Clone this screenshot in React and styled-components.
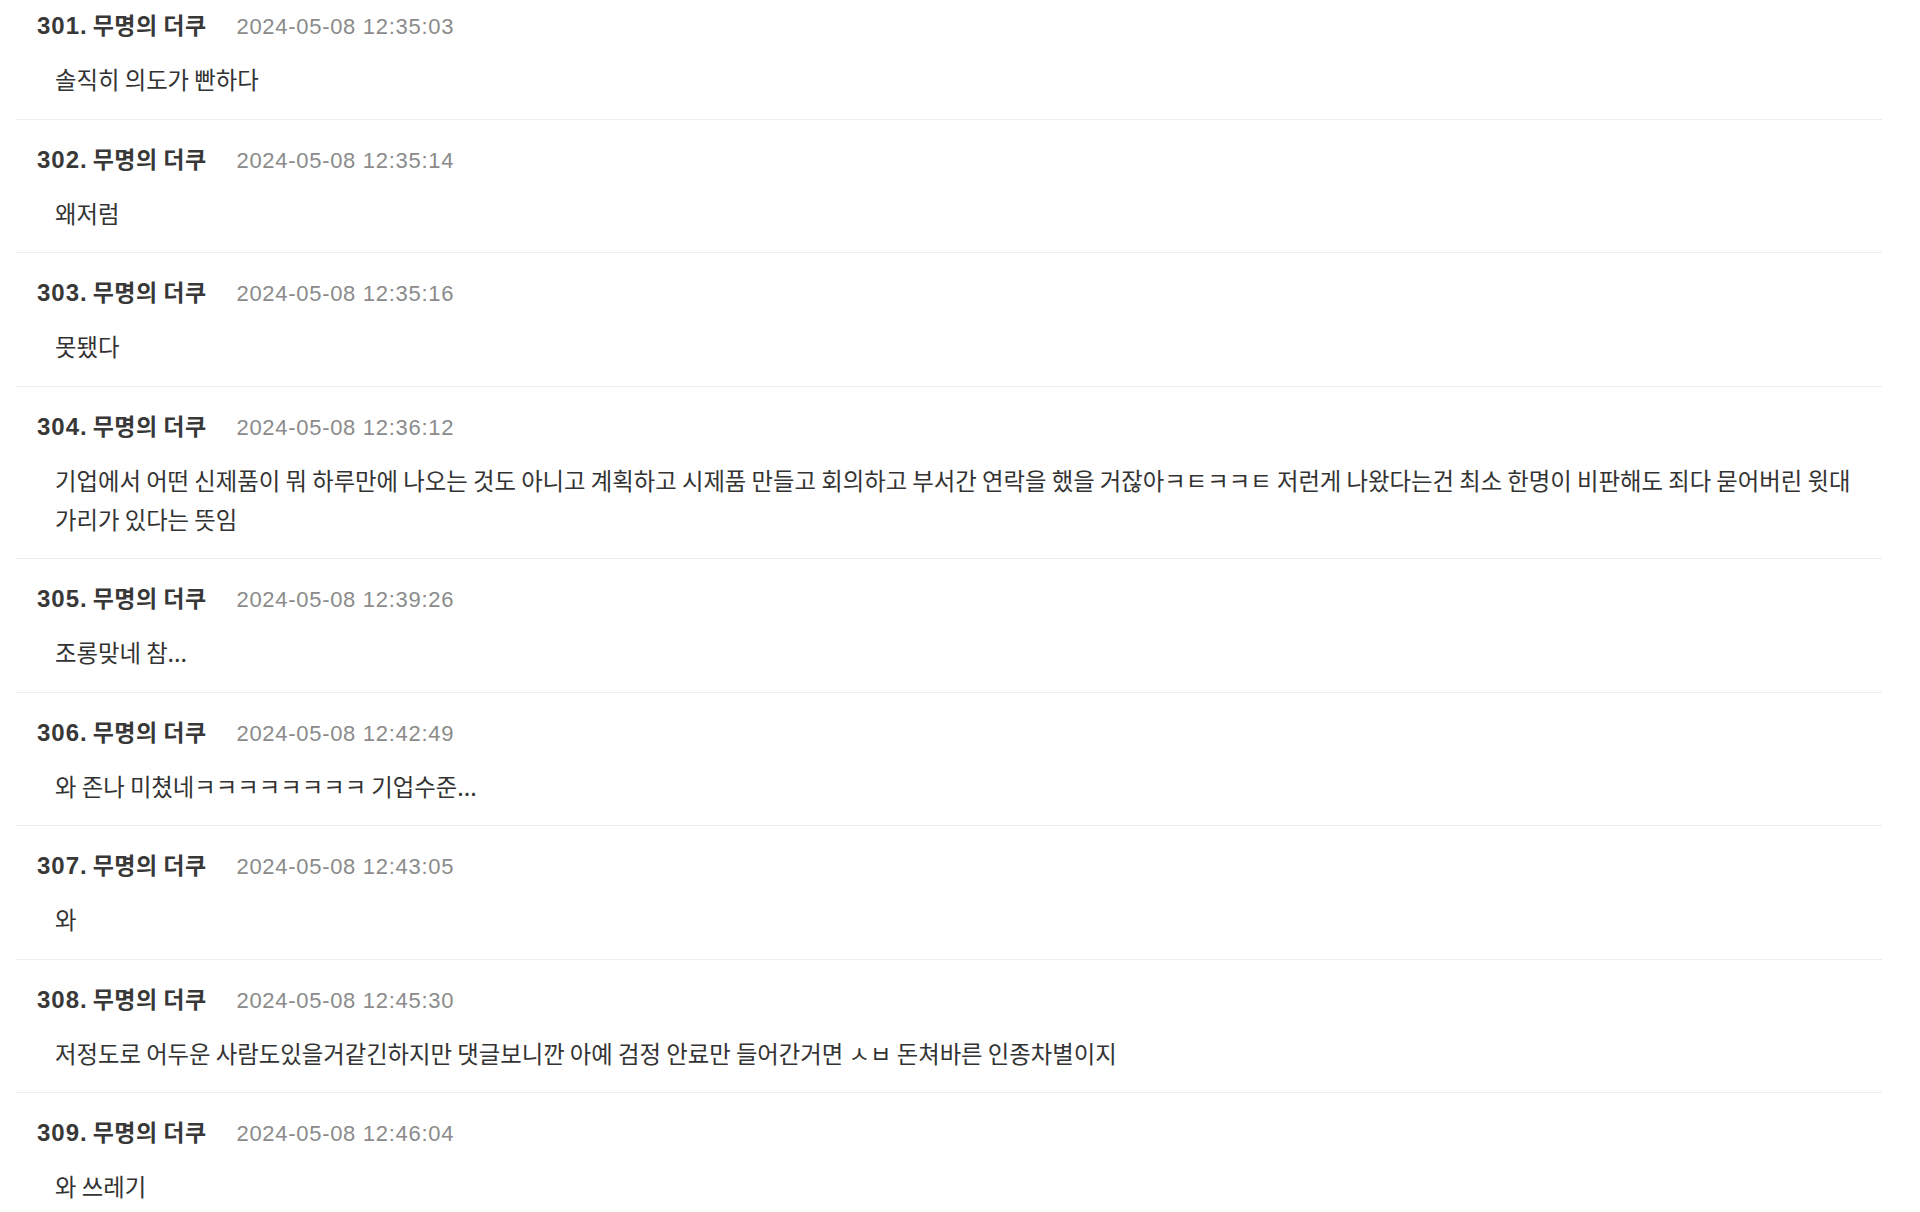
import React from 'react'
import styled, { createGlobalStyle } from 'styled-components'

const GlobalStyle = createGlobalStyle`
  html, body {
    margin: 0;
    padding: 0;
    background: #ffffff;
    overflow: hidden;
  }
`;

const comments = [
    { no: 301, name: '무명의 더쿠', date: '2024-05-08 12:35:03', text: '솔직히 의도가 빤하다' },
    { no: 302, name: '무명의 더쿠', date: '2024-05-08 12:35:14', text: '왜저럼' },
    { no: 303, name: '무명의 더쿠', date: '2024-05-08 12:35:16', text: '못됐다' },
    { no: 304, name: '무명의 더쿠', date: '2024-05-08 12:36:12', text: '기업에서 어떤 신제품이 뭐 하루만에 나오는 것도 아니고 계획하고 시제품 만들고 회의하고 부서간 연락을 했을 거잖아ㅋㅌㅋㅋㅌ 저런게 나왔다는건 최소 한명이 비판해도 죄다 묻어버린 윗대가리가 있다는 뜻임' },
    { no: 305, name: '무명의 더쿠', date: '2024-05-08 12:39:26', text: '조롱맞네 참...' },
    { no: 306, name: '무명의 더쿠', date: '2024-05-08 12:42:49', text: '와 존나 미쳤네ㅋㅋㅋㅋㅋㅋㅋㅋ 기업수준...' },
    { no: 307, name: '무명의 더쿠', date: '2024-05-08 12:43:05', text: '와' },
    { no: 308, name: '무명의 더쿠', date: '2024-05-08 12:45:30', text: '저정도로 어두운 사람도있을거같긴하지만 댓글보니깐 아예 검정 안료만 들어간거면 ㅅㅂ 돈쳐바른 인종차별이지' },
    { no: 309, name: '무명의 더쿠', date: '2024-05-08 12:46:04', text: '와 쓰레기' },
];

const Page = styled.div`
    width: 1920px;
    height: 1212px;
    overflow: hidden;
    background: #ffffff;
`;

const List = styled.ul`
    list-style: none;
    margin: -14px 38px 0 16px;
    padding: 0;
`;

const Item = styled.li`
    padding: 23px 17px 19.5px 0;
    border-bottom: 1px solid #ececec;
`;

const Header = styled.div`
    display: flex;
    align-items: baseline;
    height: 30px;
    line-height: 30px;
    padding-left: 21px;
    color: #383838;
    font-weight: 700;
`;

const Num = styled.span`
    font-family: "Liberation Sans", Arial, sans-serif;
    font-size: 24px;
    letter-spacing: 1px;
    margin-right: 5px;
`;

const Name = styled.span`
    font-family: "Noto Sans CJK KR", "Liberation Sans", sans-serif;
    font-size: 23px;
    letter-spacing: 0.02em;
`;

const Date = styled.span`
    margin-left: 30px;
    font-family: "Liberation Sans", Arial, sans-serif;
    font-size: 22px;
    letter-spacing: 0.7px;
    font-weight: 400;
    color: #8b8b8b;
`;

const Body = styled.div`
    margin-top: 21px;
    padding-left: 39px;
    font-family: "Noto Sans CJK KR", "Liberation Sans", sans-serif;
    font-size: 23.35px;
    line-height: 39px;
    color: #333333;
`;

const App = () => {
    return (
        <Page>
            <GlobalStyle />
            <List>
                {comments.map((c) => (
                    <Item key={c.no}>
                        <Header>
                            <Num>{c.no}.</Num>
                            <Name>{c.name}</Name>
                            <Date>{c.date}</Date>
                        </Header>
                        <Body>{c.text}</Body>
                    </Item>
                ))}
            </List>
        </Page>
    )
}

export default App
